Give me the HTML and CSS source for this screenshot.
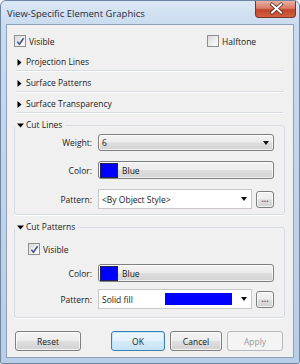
FILE: index.html
```html
<!DOCTYPE html>
<html>
<head>
    <meta charset="utf-8">
    <title>View-Specific Element Graphics</title>
    <link rel="stylesheet" href="styles.css">
</head>

<body>
    <div class="window">
        <div class="titlebar">
            <span class="title">View-Specific Element Graphics</span>
            <span class="close">
                <svg width="41" height="17" viewBox="0 0 41 17">
                    <path d="M16 4.5 L25 12.5 M25 4.5 L16 12.5" stroke="#5a2a22" stroke-width="3.6" stroke-linecap="square"/>
                    <path d="M16 4.5 L25 12.5 M25 4.5 L16 12.5" stroke="#fff" stroke-width="2" stroke-linecap="square"/>
                </svg>
            </span>
        </div>

        <div class="client">
            <div class="top-row">
                <label class="check first"><span class="box"><svg width="11" height="11" viewBox="0 0 11 11"><polyline points="2.3,5.6 4.4,8.2 8.6,2.2" fill="none" stroke="#3f4f92" stroke-width="1.5"/></svg></span>Visible</label>
                <label class="check"><span class="box"></span>Halftone</label>
            </div>

            <fieldset class="group collapsed">
                <legend><span class="tri"><svg width="7" height="7" viewBox="0 0 7 7"><path d="M0.5 0 L4.5 3.5 L0.5 7 Z" fill="#000"/></svg></span>Projection Lines</legend>
            </fieldset>
            <fieldset class="group collapsed">
                <legend><span class="tri"><svg width="7" height="7" viewBox="0 0 7 7"><path d="M0.5 0 L4.5 3.5 L0.5 7 Z" fill="#000"/></svg></span>Surface Patterns</legend>
            </fieldset>
            <fieldset class="group collapsed">
                <legend><span class="tri"><svg width="7" height="7" viewBox="0 0 7 7"><path d="M0.5 0 L4.5 3.5 L0.5 7 Z" fill="#000"/></svg></span>Surface Transparency</legend>
            </fieldset>

            <fieldset class="group cut-lines">
                <legend><span class="tri"><svg width="7" height="7" viewBox="0 0 7 7"><path d="M0 1.5 L7 1.5 L3.5 5.5 Z" fill="#000"/></svg></span>Cut Lines</legend>
                <div class="row weight-row">
                    <span class="lbl">Weight:</span>
                    <div class="face combo">
                        <span class="val">6</span>
                        <span class="arrow"></span>
                    </div>
                </div>
                <div class="row color-row">
                    <span class="lbl">Color:</span>
                    <div class="face colorbtn">
                        <span class="swatch"></span>
                        <span>Blue</span>
                    </div>
                </div>
                <div class="row pattern-row">
                    <span class="lbl">Pattern:</span>
                    <div class="select">
                        <span class="val">&lt;By Object Style&gt;</span>
                        <span class="arrow"></span>
                    </div>
                    <div class="face dots">...</div>
                </div>
            </fieldset>

            <fieldset class="group cut-patterns">
                <legend><span class="tri"><svg width="7" height="7" viewBox="0 0 7 7"><path d="M0 1.5 L7 1.5 L3.5 5.5 Z" fill="#000"/></svg></span>Cut Patterns</legend>
                <div class="row visible-row">
                    <label class="check"><span class="box"><svg width="11" height="11" viewBox="0 0 11 11"><polyline points="2.3,5.6 4.4,8.2 8.6,2.2" fill="none" stroke="#3f4f92" stroke-width="1.5"/></svg></span>Visible</label>
                </div>
                <div class="row color-row2">
                    <span class="lbl">Color:</span>
                    <div class="face colorbtn">
                        <span class="swatch"></span>
                        <span>Blue</span>
                    </div>
                </div>
                <div class="row pattern-row2">
                    <span class="lbl">Pattern:</span>
                    <div class="select">
                        <span class="val">Solid fill</span>
                        <span class="fill-swatch"></span>
                        <span class="arrow"></span>
                    </div>
                    <div class="face dots">...</div>
                </div>
            </fieldset>

            <div class="buttons">
                <button class="face btn reset">Reset</button>
                <span class="spacer"></span>
                <button class="face btn ok">OK</button>
                <button class="face btn cancel">Cancel</button>
                <button class="btn apply" disabled>Apply</button>
            </div>
        </div>
    </div>
</body>
</html>
```

FILE: styles.css
```css
body{
    margin: 0;
    padding: 0;
    background-color: #fff;
    font-family: "Open Sans", "Noto Sans", sans-serif;
    font-size: 8.5px;
    color: #1a1a1a;}

.window{
    width: 300px;
    height: 364px;
    box-sizing: border-box;
    border: 1px solid #6f86a0;
    border-radius: 6px 6px 2px 2px;
    background: linear-gradient(to bottom, #dbe7f5 0px, #c9dbef 24px, #bfd3ea 200px, #b9cee7 100%);
    overflow: hidden;}

/* title bar */
.titlebar{
    height: 23px;
    display: flex;
    align-items: flex-start;
    padding-left: 6px;}

.title{
    flex: 1;
    font-size: 9.5px;
    line-height: 23px;
    padding-top: 1px;
    color: #1e2a3a;}

.close{
    width: 41px;
    height: 17px;
    margin-right: 3px;
    box-sizing: border-box;
    border: 1px solid #7a3428;
    border-top: none;
    border-radius: 0 0 4px 4px;
    background: linear-gradient(to bottom, #eab1a3 0%, #d97b66 45%, #c4452c 55%, #d2603f 100%);}

.close svg{ display: block; margin-top: -1px; }

/* client area */
.client{
    margin: 0 5px;
    border: 1px solid #8ea1b8;
    background-color: #f0f0f0;
    padding-bottom: 6px;}

.top-row{
    display: flex;
    height: 22px;
    margin-top: 5px;
    padding-left: 7px;
    align-items: center;}

.check{
    display: flex;
    align-items: center;}

.check.first{ width: 193px; }

.box{
    width: 12px;
    height: 12px;
    box-sizing: border-box;
    border: 1px solid #8f8f8f;
    background: linear-gradient(135deg, #d8d8d8 0%, #f4f4f4 70%, #fff 100%);
    margin-right: 3px;
    position: relative;}

.box svg{
    position: absolute;
    left: -0.5px;
    top: -0.5px;}

/* group boxes */
.group{
    margin: 4px 8px 0 7px;
    padding: 0;
    min-width: 0;
    border: 1px solid #d5dbe1;
    border-radius: 3px;
    box-shadow: 0 1px 0 #fff;}

.top-row + .group{ margin-top: 2px; }

.group legend{
    display: flex;
    align-items: center;
    height: 16px;
    padding: 0 3px 0 2px;
    margin-left: 0;
    line-height: 16px;
    color: #1a1a1a;}

.tri{
    width: 7px;
    height: 7px;
    margin-right: 2px;}

.tri svg{ display: block; }

.collapsed{
    border-color: transparent transparent #d5dbe1 transparent;
    box-shadow: 0 1px 0 #fff;}

.row{
    display: flex;
    align-items: center;
    padding-right: 10px;}

.lbl{
    width: 77px;
    margin-right: 6px;
    text-align: right;
    color: #1a1a1a;}

.face{
    box-sizing: border-box;
    border: 1px solid #7f7f7f;
    border-radius: 3px;
    background: linear-gradient(to bottom, #f3f3f3 0%, #ececec 48%, #dedede 52%, #d2d2d2 100%);
    box-shadow: inset 0 0 0 1px rgba(255,255,255,0.7);}

.combo{
    flex: 1;
    height: 17px;
    display: flex;
    align-items: center;
    padding: 0 4px 0 3px;}

.val{ flex: 1; white-space: nowrap; }

.arrow{
    width: 0;
    height: 0;
    border-left: 3.5px solid transparent;
    border-right: 3.5px solid transparent;
    border-top: 4px solid #111;}

.colorbtn{
    flex: 1;
    height: 18px;
    display: flex;
    align-items: center;
    padding-left: 1px;}

.swatch{
    width: 18px;
    height: 15px;
    box-sizing: border-box;
    border: 1px solid #20205a;
    background-color: #0000ff;
    margin-right: 4px;}

.select{
    flex: 1;
    height: 20px;
    box-sizing: border-box;
    border: 1px solid #c8c8c8;
    background-color: #fff;
    display: flex;
    align-items: center;
    padding: 0 4px 0 3px;}

.dots{
    width: 18px;
    height: 17px;
    margin-left: 4px;
    text-align: center;
    font-size: 8px;
    line-height: 14px;
    font-weight: bold;
    color: #4a5a78;}

.fill-swatch{
    width: 67px;
    height: 12px;
    background-color: #0000ff;
    margin-right: 9px;}

.cut-lines{ padding-bottom: 5px; }
.weight-row{ margin-top: 1px; }
.color-row{ margin-top: 10px; }
.pattern-row{ margin-top: 10px; }

.cut-patterns{ padding-bottom: 8px; }
.visible-row{ margin-top: 7px; height: 14px; padding-left: 13px; }
.color-row2{ margin-top: 8px; }
.pattern-row2{ margin-top: 7px; }

/* dialog buttons */
.buttons{
    display: flex;
    margin: 13px 10px 0 8px;}

.spacer{ flex: 1; }

.btn{
    height: 20px;
    font-family: "Open Sans", "Noto Sans", sans-serif;
    font-size: 8.5px;
    color: #1a1a1a;
    padding: 0;
    cursor: pointer;}

.reset{ width: 66px; }
.ok{
    width: 54px;
    border-color: #3c7fb1;
    box-shadow: inset 0 0 0 1px #bfe6f9;
    background: linear-gradient(to bottom, #eef7fd 0%, #e3f1fb 48%, #d4eaf8 52%, #c9e3f5 100%);}
.cancel{ width: 52px; margin-left: 5px; }
.apply{
    width: 56px;
    margin-left: 5px;
    box-sizing: border-box;
    border: 1px solid #b5b9bd;
    border-radius: 3px;
    background-color: #f4f4f4;
    color: #9a9a9a;}
```
